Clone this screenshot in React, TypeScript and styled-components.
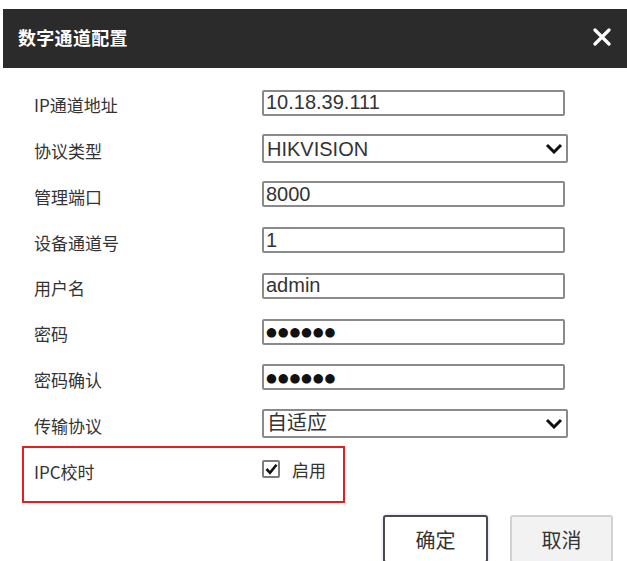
import styled, { createGlobalStyle } from "styled-components";

const GlobalStyle = createGlobalStyle`
  html, body {
    margin: 0;
    padding: 0;
    background: #ffffff;
  }
  * {
    box-sizing: border-box;
  }
`;

const Dialog = styled.div`
  width: 627px;
  height: 561px;
  overflow: hidden;
  background: #ffffff;
  padding-top: 9px;
  font-family: "Liberation Sans", "Noto Sans CJK SC", sans-serif;
`;

const Header = styled.div`
  margin-left: 3px;
  height: 59px;
  background: #2b2b2b;
  display: flex;
  align-items: center;
  justify-content: space-between;
  padding: 0 15px 0 15px;
`;

const Title = styled.h1`
  margin: 0;
  color: #ffffff;
  font-size: 18px;
  font-weight: 700;
  font-family: "Noto Sans CJK SC", sans-serif;
  letter-spacing: 0.3px;
  transform: translateY(-2px);
`;

const CloseButton = styled.button`
  border: none;
  background: transparent;
  padding: 0;
  width: 20px;
  height: 20px;
  display: flex;
  align-items: center;
  justify-content: center;
  cursor: pointer;
  transform: translateY(-2px);
`;

const Form = styled.form`
  padding: 12px 0 0 34px;
  display: flex;
  flex-direction: column;
`;

const Row = styled.div`
  display: flex;
  align-items: center;
  height: 45.75px;
`;

const Highlight = styled.div`
  margin-left: -12px;
  width: 323px;
  height: 57px;
  border: 2px solid #e41f1f;
  padding-left: 10px;
`;

const HighlightInner = styled.div`
  display: flex;
  align-items: center;
  height: 42px;
`;

const Label = styled.label`
  width: 228px;
  flex-shrink: 0;
  font-family: "Noto Sans CJK SC", sans-serif;
  font-size: 17px;
  color: #333333;
  transform: translateY(2px);
`;

const TextInput = styled.input<{ $mask?: boolean }>`
  width: 303px;
  height: 26px;
  border: 2px solid #8a8a8a;
  border-radius: 2px;
  padding: 0 2px;
  background: #ffffff;
  outline: none;
  font-family: ${(p) => (p.$mask ? '"DejaVu Sans", sans-serif' : '"Liberation Sans", "Noto Sans CJK SC", sans-serif')};
  font-size: ${(p) => (p.$mask ? "12.5px" : "20px")};
  letter-spacing: ${(p) => (p.$mask ? "0.8px" : "0")};
  color: ${(p) => (p.$mask ? "#111" : "#333")};
`;

const SelectWrap = styled.div`
  position: relative;
  width: 306px;
  height: 29px;
`;

const Select = styled.select`
  appearance: none;
  width: 100%;
  height: 100%;
  border: 2px solid #8a8a8a;
  border-radius: 2px;
  padding: 0 3px;
  background: #ffffff;
  color: #333333;
  font-family: "Liberation Sans", "Noto Sans CJK SC", sans-serif;
  font-size: 20px;
  outline: none;
`;

const Chevron = styled.svg`
  position: absolute;
  right: 5px;
  top: 9px;
  pointer-events: none;
`;

const CheckWrap = styled.label`
  display: flex;
  align-items: center;
  gap: 12px;
  font-family: "Noto Sans CJK SC", sans-serif;
  font-size: 17px;
  color: #333333;
`;

const CheckBox = styled.span`
  width: 18px;
  height: 18px;
  flex-shrink: 0;
  border: 2px solid #7c7c7c;
  border-radius: 2px;
  display: flex;
  align-items: center;
  justify-content: center;
  background: #fff;
`;

const Actions = styled.div`
  display: flex;
  justify-content: flex-end;
  gap: 22px;
  padding-right: 14px;
  margin-top: 12px;
`;

const Button = styled.button<{ $primary?: boolean }>`
  width: ${(p) => (p.$primary ? "105px" : "103px")};
  height: 48px;
  border-radius: 3px;
  border: 2px solid ${(p) => (p.$primary ? "#4a4a4a" : "#d2d2d2")};
  background: ${(p) => (p.$primary ? "#ffffff" : "#f2f2f2")};
  box-shadow: ${(p) => (p.$primary ? "0 0 3px rgba(90, 120, 200, 0.35)" : "none")};
  font-family: "Noto Sans CJK SC", sans-serif;
  font-size: 20px;
  color: #333333;
  cursor: pointer;
  padding: 0;
`;

const fields = [
  { label: "IP通道地址", value: "10.18.39.111" },
  { label: "协议类型", value: "HIKVISION", select: true },
  { label: "管理端口", value: "8000" },
  { label: "设备通道号", value: "1" },
  { label: "用户名", value: "admin" },
  { label: "密码", value: "●●●●●●", mask: true },
  { label: "密码确认", value: "●●●●●●", mask: true },
  { label: "传输协议", value: "自适应", select: true },
];

function App() {
  return (
    <>
      <GlobalStyle />
      <Dialog>
        <Header>
          <Title>数字通道配置</Title>
          <CloseButton aria-label="关闭">
            <svg width="18" height="18" viewBox="0 0 18 18">
              <path d="M2 2 L16 16 M16 2 L2 16" stroke="#ffffff" strokeWidth="3.2" strokeLinecap="round" />
            </svg>
          </CloseButton>
        </Header>
        <Form onSubmit={(e) => e.preventDefault()}>
          {fields.map((f) => (
            <Row key={f.label}>
              <Label>{f.label}</Label>
              {f.select ? (
                <SelectWrap>
                  <Select defaultValue={f.value}>
                    <option>{f.value}</option>
                  </Select>
                  <Chevron width="18" height="11" viewBox="0 0 18 11">
                    <path d="M2 2 L9 9 L16 2" fill="none" stroke="#111" strokeWidth="3" />
                  </Chevron>
                </SelectWrap>
              ) : (
                <TextInput readOnly value={f.value} $mask={f.mask} />
              )}
            </Row>
          ))}
          <Highlight>
            <HighlightInner>
              <Label>IPC校时</Label>
              <CheckWrap>
                <CheckBox>
                  <svg width="13" height="12" viewBox="0 0 13 12">
                    <path d="M1.5 6 L5 9.8 L11.5 1.8" fill="none" stroke="#111" strokeWidth="2.6" />
                  </svg>
                </CheckBox>
                启用
              </CheckWrap>
            </HighlightInner>
          </Highlight>
          <Actions>
            <Button $primary type="submit">确定</Button>
            <Button type="button">取消</Button>
          </Actions>
        </Form>
      </Dialog>
    </>
  );
}

export default App;
